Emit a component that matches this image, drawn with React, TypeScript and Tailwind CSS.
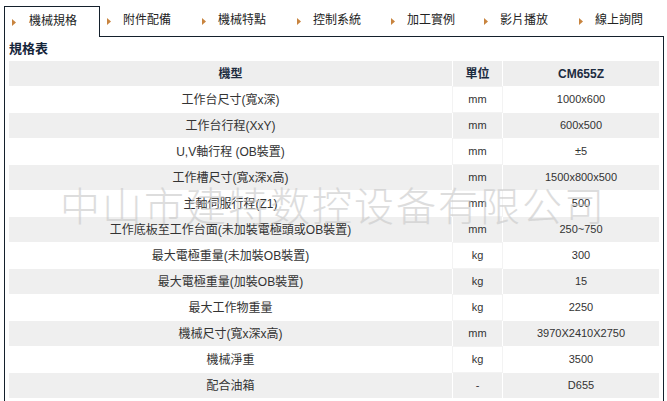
import React from "react";

const tabs = [
  { label: "機械規格", w: "w-[96px]", active: true },
  { label: "附件配備", w: "w-[95px]" },
  { label: "機械特點", w: "w-[95px]" },
  { label: "控制系統", w: "w-[94px]" },
  { label: "加工實例", w: "w-[93px]" },
  { label: "影片播放", w: "w-[95px]" },
  { label: "線上詢問", w: "w-[94px]" },
];

const rows: [string, string, string][] = [
  ["工作台尺寸(寬x深)", "mm", "1000x600"],
  ["工作台行程(XxY)", "mm", "600x500"],
  ["U,V軸行程 (OB裝置)", "mm", "±5"],
  ["工作槽尺寸(寬x深x高)", "mm", "1500x800x500"],
  ["主軸伺服行程(Z1)", "mm", "500"],
  ["工作底板至工作台面(未加裝電極頭或OB裝置)", "mm", "250~750"],
  ["最大電極重量(未加裝OB裝置)", "kg", "300"],
  ["最大電極重量(加裝OB裝置)", "kg", "15"],
  ["最大工作物重量", "kg", "2250"],
  ["機械尺寸(寬x深x高)", "mm", "3970X2410X2750"],
  ["機械淨重", "kg", "3500"],
  ["配合油箱", "-", "D655"],
];

function Arrow() {
  return (
    <svg width="4" height="7" viewBox="0 0 4 7" className="shrink-0">
      <path d="M0 0 L4 3.5 L0 7 Z" fill="#c8843f" />
    </svg>
  );
}

export default function App() {
  return (
    <div
      className="relative w-[667px] h-[401px] overflow-hidden bg-white text-[#333]"
      style={{ fontFamily: '"Liberation Sans", "Noto Sans CJK TC", sans-serif' }}
    >
      <div className="pl-[4px] pt-[6px]">
        <div className="flex h-[30px]">
          {tabs.map((t) =>
            t.active ? (
              <div
                key={t.label}
                className={`${t.w} h-[31px] relative z-10 bg-white border-t border-l border-r border-[#14202c] flex items-center pl-[7px] -mb-px`}
              >
                <Arrow />
                <span className="ml-[13px] text-[12px] text-[#222] leading-none pb-[2px]">{t.label}</span>
              </div>
            ) : (
              <div key={t.label} className={`${t.w} h-[30px] flex items-center pl-[7px]`}>
                <Arrow />
                <span className="ml-[12px] text-[12px] text-[#222] leading-none pb-[2px]">{t.label}</span>
              </div>
            )
          )}
        </div>
        <div className="w-[660px] h-[400px] border-t border-l border-r border-[#14202c]">
          <div className="h-[24px] flex items-center pl-[4px] text-[13px] font-bold text-[#15253a]">規格表</div>
          <div className="ml-[4px] w-[650px] flex flex-col gap-px">
            <div className="grid grid-cols-[443px_49px_156px] gap-px h-[25px] text-[12px] font-bold text-[#1c2b40]">
              <div className="bg-[#eeeeee] flex items-center justify-center">機型</div>
              <div className="bg-[#eeeeee] flex items-center justify-center">單位</div>
              <div className="bg-[#eeeeee] flex items-center justify-center">CM655Z</div>
            </div>
            {rows.map((r, i) => {
              const gray = i % 2 === 1;
              const cell = gray
                ? "bg-[#efefef] flex items-center justify-center"
                : "bg-white flex items-center justify-center";
              return (
                <div key={i} className="grid grid-cols-[443px_49px_156px] gap-px h-[25px] text-[12px] bg-white">
                  <div className={cell}>{r[0]}</div>
                  <div className={`${cell} text-[11px] ${gray ? "" : "outline outline-1 outline-[#f3f3f3]"}`}>{r[1]}</div>
                  <div className={`${cell} text-[11px]`}>{r[2]}</div>
                </div>
              );
            })}
          </div>
        </div>
      </div>
      <div
        className="pointer-events-none absolute left-[60px] top-[180px] text-[40px] tracking-[2px] leading-[48px] font-light text-[#c8c8c8] opacity-60 whitespace-nowrap"
        style={{ fontFamily: '"Noto Sans CJK SC", sans-serif' }}
      >
        中山市建特数控设备有限公司
      </div>
    </div>
  );
}
